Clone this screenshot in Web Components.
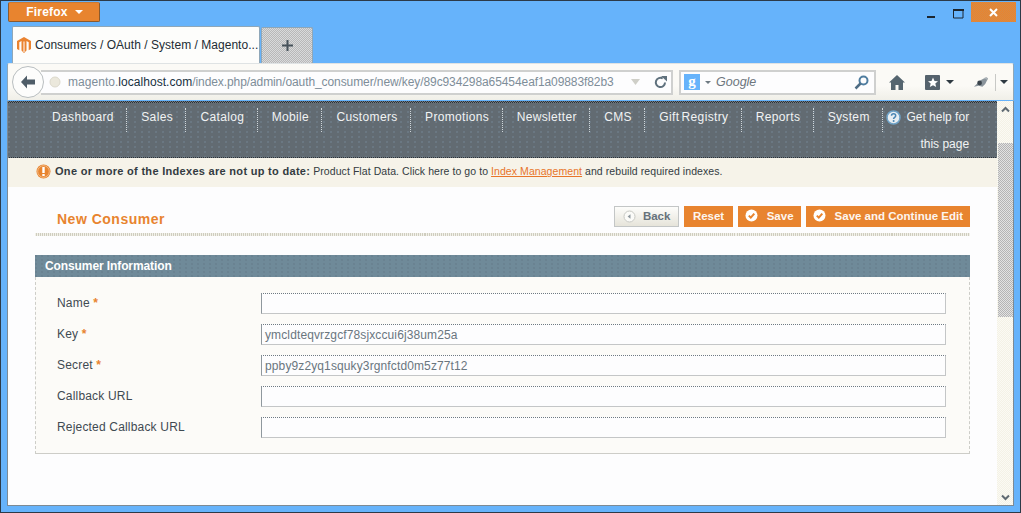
<!DOCTYPE html>
<html>
<head>
<meta charset="utf-8">
<title>Consumers / OAuth / System / Magento Admin</title>
<style>
    html, body {
        margin: 0;
        padding: 0;
        width: 1021px;
        height: 513px;
        overflow: hidden;
        font-family: "Liberation Sans", Arial, sans-serif;
    }
</style>
</head>
<body>
<ff-window>
    <ff-titlebar slot="title"></ff-titlebar>
    <ff-tabs slot="tabs"></ff-tabs>
    <ff-toolbar slot="toolbar"></ff-toolbar>
    <mage-nav>
        <a>Dashboard</a><a>Sales</a><a>Catalog</a><a>Mobile</a><a>Customers</a><a>Promotions</a><a>Newsletter</a><a>CMS</a><a>Gift Registry</a><a>Reports</a><a>System</a>
    </mage-nav>
    <mage-notice></mage-notice>
    <mage-head>
        <mage-button slot="buttons" kind="back">Back</mage-button>
        <mage-button slot="buttons">Reset</mage-button>
        <mage-button slot="buttons" kind="save">Save</mage-button>
        <mage-button slot="buttons" kind="save">Save and Continue Edit</mage-button>
    </mage-head>
    <mage-fieldset>
        <mage-field required>Name</mage-field>
        <mage-field required value="ymcldteqvrzgcf78sjxccui6j38um25a">Key</mage-field>
        <mage-field required value="ppby9z2yq1squky3rgnfctd0m5z77t12">Secret</mage-field>
        <mage-field>Callback URL</mage-field>
        <mage-field>Rejected Callback URL</mage-field>
    </mage-fieldset>
</ff-window>

<script>
class BaseElement extends HTMLElement {
    constructor(content) {
        super();
        const shadowRoot = this.attachShadow({ mode: 'open' });
        shadowRoot.innerHTML = content;
        this.shadow = shadowRoot;
    }
}

class FfWindow extends BaseElement {
    constructor() {
        super(`
<style>
    :host {
        display: flex;
        flex-direction: column;
        box-sizing: border-box;
        width: 1021px;
        height: 513px;
        background: #66b3fb;
        border: 1px solid #2c3a48;
        padding: 0 6px 6px 6px;
    }
    .content {
        display: flex;
        flex: 1;
        min-height: 0;
        border: 1px solid #7d8a94;
        border-top: 0;
        background: #fdfdfe;
    }
    .page {
        flex: 1;
        min-width: 0;
        display: flex;
        flex-direction: column;
    }
    .scroll {
        width: 16px;
        display: flex;
        flex-direction: column;
        align-items: center;
        background: repeating-conic-gradient(#f4f2e6 0 25%, #fbfaf4 0 50%) 0 0/2px 2px;
    }
    .arrow {
        height: 16px;
        display: flex;
        align-items: center;
        justify-content: center;
        flex: none;
    }
    .thumb {
        width: 15px;
        height: 174px;
        margin-top: 26px;
        background: repeating-conic-gradient(#b4b4b4 0 25%, #e2e2e2 0 50%) 0 0/2px 2px;
    }
    .spacer { flex: 1; }
</style>
<slot name="title"></slot>
<slot name="tabs"></slot>
<slot name="toolbar"></slot>
<div class="content">
    <div class="page"><slot></slot></div>
    <div class="scroll">
        <div class="arrow"><svg width="9" height="7" viewBox="0 0 9 7"><path d="M1 5.500 4.500 2 8 5.500" fill="none" stroke="#5f6a72" stroke-width="2"/></svg></div>
        <div class="thumb"></div>
        <div class="spacer"></div>
        <div class="arrow"><svg width="9" height="7" viewBox="0 0 9 7"><path d="M1 1.500 4.500 5 8 1.500" fill="none" stroke="#5f6a72" stroke-width="2"/></svg></div>
    </div>
</div>
        `);
    }
}

class FfTitlebar extends BaseElement {
    constructor() {
        super(`
<style>
    :host {
        display: flex;
        justify-content: space-between;
        align-items: flex-start;
        height: 25px;
    }
    .menu {
        box-sizing: border-box;
        width: 92px;
        height: 20px;
        margin: 1px 0 0 1px;
        display: flex;
        align-items: center;
        justify-content: center;
        gap: 7px;
        padding-left: 1px;
        background: #e8842f;
        border: 1px solid #8a5a2e;
        border-top-color: #c97a34;
        border-radius: 2px;
        color: #fff;
        font: bold 12px "Liberation Sans", Arial, sans-serif;
        letter-spacing: .2px;
    }
    .caret {
        width: 0;
        height: 0;
        border: 4px solid transparent;
        border-top: 4px solid #fff;
        border-bottom: 0;
    }
    .controls {
        display: flex;
        align-items: flex-start;
        margin-right: -2px;
    }
    .ctl {
        display: flex;
        align-items: center;
    }
    .close {
        width: 45px;
        height: 20px;
        margin: 1px 0 0 7px;
        justify-content: center;
        background: repeating-conic-gradient(#e8842f 0 25%, #d88a44 0 50%) 0 0/2px 2px;
    }
</style>
<div class="menu"><span>Firefox</span><span class="caret"></span></div>
<div class="controls">
    <div class="ctl" style="width:26px;height:26px"><svg width="9" height="10" viewBox="0 0 9 10"><rect y="7" width="8" height="2" fill="#1c2630"/></svg></div>
    <div class="ctl" style="width:11px;height:25px"><svg width="11" height="10" viewBox="0 0 11 10"><path d="M.5 1.500h9.500v7.500h-9.500z" fill="none" stroke="#1c2630"/><rect width="11" height="2" fill="#1c2630"/></svg></div>
    <div class="ctl close"><svg width="9" height="9" viewBox="0 0 9 9"><path d="M1 1 8 8M8 1 1 8" stroke="#fff" stroke-width="2"/></svg></div>
</div>
        `);
    }
}

class FfTabs extends BaseElement {
    constructor() {
        super(`
<style>
    :host {
        display: flex;
        align-items: flex-end;
        height: 37px;
        padding-left: 5px;
        gap: 1px;
    }
    .tab {
        box-sizing: border-box;
        width: 248px;
        height: 37px;
        padding: 0 0 0 4px;
        display: flex;
        align-items: center;
        gap: 4px;
        background: #fdfdfb;
        border: 1px solid #8fa7b8;
        border-bottom: 0;
        border-radius: 2px 2px 0 0;
        color: #222c34;
        font-size: 12px;
        letter-spacing: .03px;
        white-space: nowrap;
    }
    .tab svg { flex: none; }
    .new {
        box-sizing: border-box;
        width: 52px;
        height: 36px;
        display: flex;
        align-items: center;
        justify-content: center;
        background: repeating-conic-gradient(#b8b8b8 0 25%, #d9dadb 0 50%) 0 0/2px 2px;
        border: 1px solid #8fa7b8;
        border-bottom: 0;
        border-radius: 2px 2px 0 0;
    }
</style>
<div class="tab">
    <svg width="14" height="16" viewBox="0 0 14 16"><path d="M7 0 14 4v8l-2.300 1.300V5.300L9.500 4v9.500L7 16 4.500 13.500V4L2.300 5.300v8L0 12V4z" fill="#ea8330"/><path d="M6.500 4.500h1V15h-1z" fill="#fff"/></svg>
    <span>Consumers / OAuth / System / Magento...</span>
</div>
<div class="new"><svg width="11" height="11" viewBox="0 0 11 11"><path d="M5.500 0v11M0 5.500h11" stroke="#47525b" stroke-width="2"/></svg></div>
        `);
    }
}

class FfToolbar extends BaseElement {
    constructor() {
        super(`
<style>
    :host {
        display: flex;
        align-items: center;
        box-sizing: border-box;
        height: 38px;
        padding: 0 0 0 4px;
        background: linear-gradient(#fbfaf6 60%, #f0efe8);
        border: 1px solid #8fa7b8;
        border-bottom: 1px solid #66b3fb;
        border-radius: 2px 2px 0 0;
        border-top-color: #dfe3e4;
        position: relative;
    }
    .back {
        box-sizing: border-box;
        width: 32px;
        height: 32px;
        flex: none;
        border-radius: 50%;
        background: #fdfdfc;
        border: 1px solid #b9bec0;
        display: flex;
        align-items: center;
        justify-content: center;
        z-index: 1;
    }
    .url {
        box-sizing: border-box;
        width: 632px;
        height: 25px;
        margin-left: -3px;
        padding: 0 4px 0 8px;
        display: flex;
        align-items: center;
        background: #fdfdfe;
        border: 2px solid #cfd0cf;
        border-left: 0;
        font-size: 12px;
        color: #7e8d99;
        white-space: nowrap;
    }
    .url svg { flex: none; }
    .url b { font-weight: normal; color: #17303f; }
    .url .addr { flex: 1; min-width: 0; margin-left: 7px; letter-spacing: -.09px; }
    .url .host { letter-spacing: .04px; }
    .url .star { margin: 0 14px 0 8px; }
    .search {
        box-sizing: border-box;
        width: 197px;
        height: 25px;
        margin-left: 6px;
        padding: 0 5px 0 3px;
        display: flex;
        align-items: center;
        background: #fdfdfe;
        border: 2px solid #cfd0cf;
        font: italic 12.500px "Liberation Sans", Arial, sans-serif;
        color: #6d767d;
    }
    .search .g {
        width: 16px;
        height: 16px;
        background: #66b3fb;
        color: #fff;
        font: bold 15px/15px "Liberation Serif", serif;
        text-align: center;
    }
    .search .label { flex: 1; margin-left: 5px; }
    .tools {
        display: flex;
        align-items: center;
        flex: 1;
        padding-left: 13px;
    }
    .caret {
        width: 0;
        height: 0;
        flex: none;
        border: 4px solid transparent;
        border-top: 4px solid #2f3a42;
        border-bottom: 0;
    }
    .sep {
        width: 1px;
        height: 17px;
        background: #c8c9c6;
    }
</style>
<div class="back"><svg width="18" height="16" viewBox="0 0 18 16"><path d="M8 1.500 2 8l6 6.500V10.500h8v-5H8z" fill="#4f5d68"/></svg></div>
<div class="url">
    <svg width="12" height="12" viewBox="0 0 12 12"><circle cx="6" cy="6" r="5" fill="#ebe8dc" stroke="#dcd9cc"/></svg>
    <span class="addr"><span class="host">magento.<b>localhost.com</b></span>/index.php/admin/oauth_consumer/new/key/89c934298a65454eaf1a09883f82b3</span>
    <svg class="star" width="9" height="6" viewBox="0 0 9 6"><path d="M0 0h9L4.500 6z" fill="#cfcfc8"/></svg>
    <svg width="13" height="13" viewBox="0 0 13 13"><path d="M11 6.500A4.600 4.600 0 1 1 8.700 2.500" fill="none" stroke="#5f717d" stroke-width="2"/><path d="M7 0h6v5.500z" fill="#5f717d"/></svg>
</div>
<div class="search">
    <span class="g">g</span>
    <span class="caret" style="border-top-color:#6e7a82;margin-left:5px;border-width:3px 3px 0"></span>
    <span class="label">Google</span>
    <svg width="15" height="15" viewBox="0 0 15 15"><circle cx="9.500" cy="5.500" r="4" fill="none" stroke="#4f7da0" stroke-width="2"/><path d="M6.500 8.500 1.500 13.500" stroke="#4f6d85" stroke-width="2.500"/></svg>
</div>
<div class="tools">
    <svg width="16" height="15" viewBox="0 0 16 15"><path d="M8 0 16 7.500h-2V15H9.500v-5h-3v5H2V7.500H0z" fill="#55656f"/></svg>
    <svg style="margin-left:20px" width="15" height="15" viewBox="0 0 15 15"><rect width="15" height="15" rx="1" fill="#55626c"/><path d="M8 2.500 9.500 6l3.500.3-2.700 2.200.9 3.500L8 10.200 4.800 12l.9-3.500L3 6.300 6.500 6z" fill="#fff"/></svg>
    <span class="caret" style="margin-left:6px"></span>
    <svg style="margin-left:19px" width="16" height="13" viewBox="0 0 17 13"><path d="M1 11 5 7l3-3 6-3 2 1-3 6-3 3-4-1z" fill="#8a949b"/><circle cx="7" cy="7" r="2.500" fill="#3a444c"/><path d="M12 2h3v2" stroke="#b8bec2" fill="none"/></svg>
    <span class="sep" style="margin-left:6px"></span>
    <span class="caret" style="margin-left:4px"></span>
</div>
        `);
    }
}

class MageNav extends BaseElement {
    constructor() {
        super(`
<style>
    :host {
        display: flex;
        align-items: flex-start;
        box-sizing: border-box;
        height: 57px;
        padding: 7px 0 0 30px;
        background:
            radial-gradient(circle at 1px 1px, #6f7f8b .6px, transparent .9px) 0 0/7px 5px,
            #626b72;
        position: relative;
        color: #f1f3f4;
        font-size: 12px;
        letter-spacing: .35px;
        word-spacing: -1.5px;
    }
    :host::before, :host::after {
        content: "";
        position: absolute;
        left: 0;
        right: 0;
        height: 2px;
        background: repeating-conic-gradient(#2c3136 0 25%, #6f7a82 0 50%) 0 0/2px 2px;
    }
    :host::before { top: 0; }
    :host::after { bottom: 0; height: 1px; }
    ::slotted(a) {
        box-sizing: border-box;
        display: block;
        height: 24px;
        padding: 1px 12.400px 0 14px;
        border-right: 1px dotted #cfd6da;
        line-height: 16px;
        white-space: nowrap;
    }
    .help {
        width: 83px;
        margin: -4px 0 0 3px;
        line-height: 27px;
        text-align: right;
        letter-spacing: 0;
        word-spacing: 0;
        flex: none;
    }
    .help svg { float: left; margin-top: 6px; }
</style>
<slot></slot>
<div class="help">
    <svg width="15" height="15" viewBox="0 0 15 15"><circle cx="7.500" cy="7.500" r="6.500" fill="#e8eef2" stroke="#6fa3c8" stroke-width="1.500"/><path d="M5.500 5.800c0-2.600 4.200-2.600 4.200 0 0 1.700-2.100 1.500-2.100 3.200" fill="none" stroke="#4a86b4" stroke-width="1.500"/><circle cx="7.600" cy="11" r="1" fill="#4a86b4"/></svg>Get help for this page
</div>
        `);
    }
}

class MageNotice extends BaseElement {
    constructor() {
        super(`
<style>
    :host {
        display: flex;
        align-items: center;
        gap: 4px;
        box-sizing: border-box;
        height: 29px;
        padding: 0 0 3px 28px;
        background: #f6f3e9;
        color: #333b41;
        font-size: 10.500px;
        letter-spacing: .07px;
        white-space: nowrap;
    }
    b { font-size: 11px; letter-spacing: .3px; }
    a { color: #e8752a; text-decoration: underline; }
    svg { flex: none; }
</style>
<svg width="15" height="15" viewBox="0 0 15 15"><circle cx="7.500" cy="7.500" r="7" fill="#e8842f"/><circle cx="7.500" cy="7.500" r="5.800" fill="none" stroke="#f6d3ae" stroke-width=".7"/><rect x="6.300" y="3" width="2.400" height="6" fill="#fff"/><rect x="6.300" y="10" width="2.400" height="2" fill="#fff"/></svg>
<span><b>One or more of the Indexes are not up to date:</b> Product Flat Data. Click here to go to <a>Index Management</a> and rebuild required indexes.</span>
        `);
    }
}

class MageHead extends BaseElement {
    constructor() {
        super(`
<style>
    :host {
        display: block;
        padding: 19px 27px 0 27px;
    }
    .row {
        box-sizing: border-box;
        height: 30px;
        display: flex;
        align-items: flex-start;
        justify-content: space-between;
        padding-left: 22px;
        border-bottom: 3px solid transparent;
        border-image: repeating-linear-gradient(90deg, #cfcdbf 0 1px, #f2f1ea 1px 2px) 3;
    }
    h3 {
        margin: 5px 0 0;
        color: #e8842f;
        font-size: 14px;
        letter-spacing: .5px;
    }
    .buttons { display: flex; gap: 5px; }
</style>
<div class="row">
    <h3>New Consumer</h3>
    <div class="buttons"><slot name="buttons"></slot></div>
</div>
        `);
    }
}

class MageButton extends BaseElement {
    constructor() {
        super(`
<style>
    :host {
        box-sizing: border-box;
        display: flex;
        align-items: center;
        height: 21px;
        padding: 0 8.500px 2px;
        gap: 7px;
        background: #e8842f;
        color: #fdf6ef;
        font-size: 11.500px;
        font-weight: bold;
        white-space: nowrap;
    }
    :host([kind="back"]) {
        padding: 0 8px 1px;
        background: linear-gradient(#fdfdfb, #e6e4da);
        border: 1px solid #c3c6c6;
        color: #66727b;
    }
    svg { display: none; flex: none; }
    :host([kind="save"]) .save { display: block; }
    :host([kind="back"]) .back { display: block; }
    :host([kind="save"]) { gap: 9px; padding: 0 7px 2px 7px; }
</style>
<svg class="back" width="13" height="13" viewBox="0 0 13 13"><circle cx="6.500" cy="6.500" r="5.500" fill="#fbfbf8" stroke="#c8c9c4"/><path d="M7.500 4.300v4.400L4.600 6.500z" fill="#8e979d"/></svg>
<svg class="save" width="13" height="13" viewBox="0 0 13 13"><circle cx="6.500" cy="6.500" r="6" fill="#fff"/><path d="M3.800 6.600 5.800 8.600 9.300 4.600" fill="none" stroke="#e8842f" stroke-width="2"/></svg>
<slot></slot>
        `);
    }
}

class MageFieldset extends BaseElement {
    constructor() {
        super(`
<style>
    :host {
        display: block;
        margin: 19px 27px 0 27px;
        color: #3f4a52;
    }
    h4 {
        box-sizing: border-box;
        margin: 0;
        height: 22px;
        padding: 0 10px;
        line-height: 23px;
        background:
            radial-gradient(circle at 1px 1px, #677f8d .6px, transparent .9px) 0 0/6px 4px,
            #6f8a99;
        color: #fff;
        font-size: 12px;
        letter-spacing: -.1px;
    }
    .body {
        box-sizing: border-box;
        height: 177px;
        padding: 16px 23px 0 21px;
        display: flex;
        flex-direction: column;
        gap: 10px;
        background: #fcfbf8;
        border: 1px dashed #cdcdc8;
        border-top: 0;
        border-bottom: 1px solid #cdcdc8;
    }
</style>
<h4>Consumer Information</h4>
<div class="body"><slot></slot></div>
        `);
    }
}

class MageField extends BaseElement {
    constructor() {
        super(`
<style>
    :host {
        display: flex;
        height: 21px;
        font-size: 12px;
        letter-spacing: .18px;
    }
    .label {
        width: 204px;
        flex: none;
        line-height: 20px;
        white-space: nowrap;
    }
    .req { display: none; color: #e8842f; font-weight: bold; }
    :host([required]) .req { display: inline; }
    .input {
        box-sizing: border-box;
        flex: 1;
        height: 21px;
        padding: 0 3px;
        line-height: 21px;
        background: #fdfdfe;
        border: 1px solid #c4c6c7;
        border-top: 1px dotted #6f7a82;
        border-left-color: #8f989e;
        color: #6a767e;
        letter-spacing: .12px;
    }
</style>
<div class="label"><slot></slot> <span class="req">*</span></div>
<div class="input"></div>
        `);
    }

    connectedCallback() {
        this.shadow.querySelector('.input').textContent = this.getAttribute('value') || '';
    }
}

customElements.define('ff-window', FfWindow);
customElements.define('ff-titlebar', FfTitlebar);
customElements.define('ff-tabs', FfTabs);
customElements.define('ff-toolbar', FfToolbar);
customElements.define('mage-nav', MageNav);
customElements.define('mage-notice', MageNotice);
customElements.define('mage-head', MageHead);
customElements.define('mage-button', MageButton);
customElements.define('mage-fieldset', MageFieldset);
customElements.define('mage-field', MageField);
</script>
</body>
</html>
